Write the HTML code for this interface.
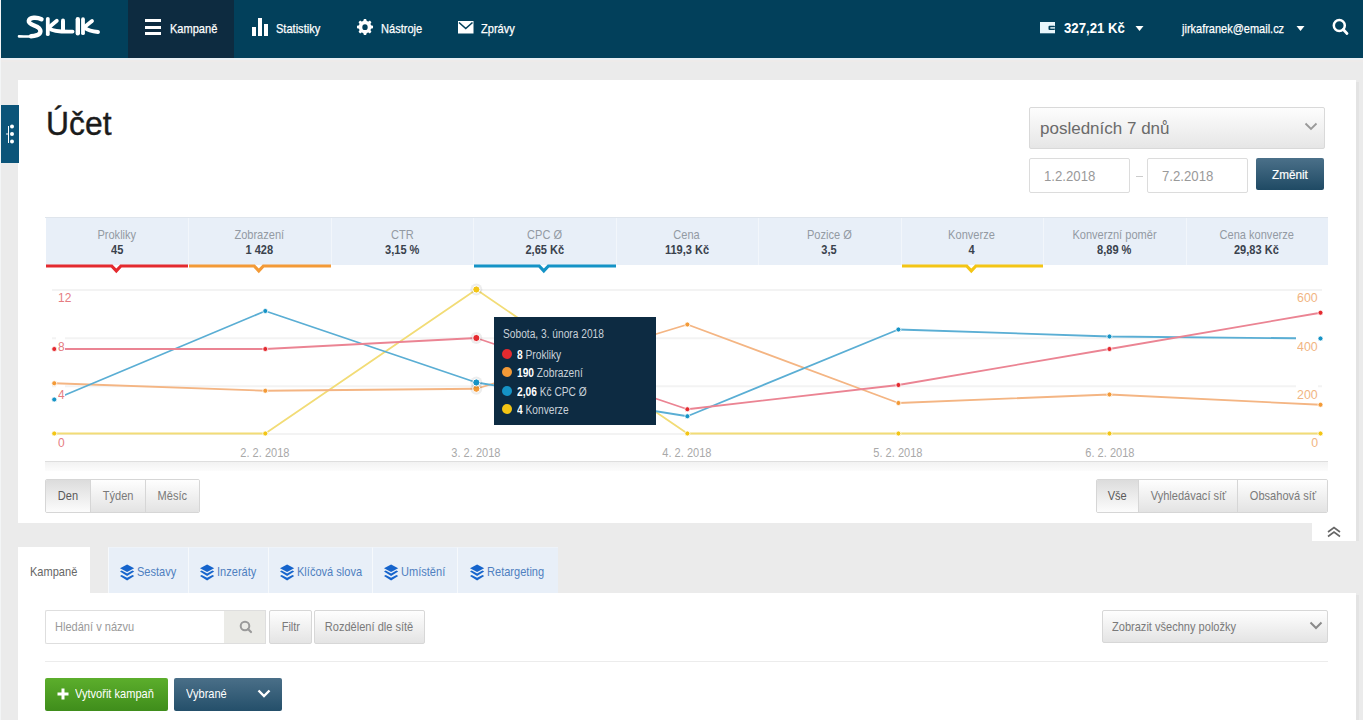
<!DOCTYPE html>
<html><head><meta charset="utf-8">
<style>
*{margin:0;padding:0;box-sizing:border-box}
html,body{width:1363px;height:720px;overflow:hidden;background:#ebebeb;font-family:"Liberation Sans",sans-serif}
.a{position:absolute}
.t{position:absolute;white-space:nowrap;line-height:1}
.n{display:inline-block;transform:scaleX(.85);transform-origin:0 50%}
.c{text-align:center}
.c .n{transform-origin:50% 50%}
.r{text-align:right}
.r .n{transform-origin:100% 50%}
#hdr{left:0;top:0;width:1363px;height:58px;background:#02405b}
.nav{color:#fff;font-size:13px;-webkit-text-stroke:0.25px #fff}

.met{font-size:13px;color:#939aa3}
.metv{font-size:13px;color:#3a424d;font-weight:bold}
.yl{font-size:13px;color:#e57c81}
.yl .n{transform:scaleX(.92)}
.yr{font-size:13px;color:#f1b582}
.yr .n{transform:scaleX(.95)}
.xl{font-size:13px;color:#a9a9a9}
.tt{font-size:12px;color:#c9d1d9}
.tt b{color:#fff}
.dot{width:10px;height:10px;border-radius:50%}
.bt{font-size:13px;color:#7a7a7a}
.btn{border:1px solid #d7d7d7;border-radius:2px;background:linear-gradient(#fefefe,#e4e4e4)}
.btn.act{background:linear-gradient(#dddddd,#fdfdfd)}
.tab{font-size:13px}
.grp{border:1px solid #d6d6d6;border-radius:2px;overflow:hidden;display:flex}
.seg{height:32px;background:linear-gradient(#fefefe,#e3e3e3);border-left:1px solid #d6d6d6}
.seg:first-child{border-left:0}
.seg.act{background:linear-gradient(#dcdcdc,#fcfcfc)}
.tb{background:#e8eff8;border-left:1px solid #f6f9fc;border-top:1px solid #eef3f9}
</style></head><body>
<!-- header -->
<div id="hdr" class="a"></div>
<div class="a" style="left:0;top:58px;width:1363px;height:2px;background:#e9f0f4"></div>
<div class="a" style="left:0;top:60px;width:1363px;height:2px;background:#eeebea"></div>
<div class="a" style="left:0;top:0;width:1px;height:720px;background:#f3f5f6"></div>
<svg class="a" style="left:0;top:0" width="110" height="58" viewBox="0 0 110 58">
 <g fill="none" stroke="#fff" stroke-linecap="round" stroke-linejoin="round">
  <path d="M41.5,19.2 C37,17 29.5,17 28.8,20.8 C28.3,24 34,25 37.5,27 C41.5,29.5 41.5,33.5 37,35.2 C35,35.9 33,36.2 31,36.3" stroke-width="4.4"/>
  <path d="M33,36 C28,36.6 23,36.6 19,36.4" stroke-width="2.6"/>
  <path d="M47.8,18.8 L47.8,34.2" stroke-width="3.8"/>
  <path d="M56.8,20.8 L49,27.2" stroke-width="3.8"/>
  <path d="M49.5,28.5 C53,31.8 63,31.8 72.5,31.6" stroke-width="3.9"/>
  <path d="M63,20.5 L63,31" stroke-width="4"/>
  <path d="M77.8,19.2 L77.8,33.2" stroke-width="4.4"/>
  <path d="M83,19.2 L83,33.2" stroke-width="3.8"/>
  <path d="M92,21 L84.5,27" stroke-width="3.8"/>
  <path d="M85,28 C88.5,30.8 93,31.4 98,32" stroke-width="3.9"/>
 </g>
</svg>
<div class="a" style="left:128px;top:0;width:106px;height:58px;background:#0d2b40"></div>
<!-- hamburger -->
<div class="a" style="left:145px;top:19px;width:16px;height:3px;background:#fff"></div>
<div class="a" style="left:145px;top:25.5px;width:16px;height:3px;background:#fff"></div>
<div class="a" style="left:145px;top:32px;width:16px;height:3px;background:#fff"></div>
<div class="t nav" style="left:170px;top:21.5px"><span class="n">Kampaně</span></div>
<!-- stats icon -->
<div class="a" style="left:252px;top:27px;width:4px;height:9px;background:#fff"></div>
<div class="a" style="left:258px;top:18px;width:4px;height:18px;background:#fff"></div>
<div class="a" style="left:264px;top:24px;width:4px;height:12px;background:#fff"></div>
<div class="t nav" style="left:276px;top:21.5px"><span class="n">Statistiky</span></div>
<!-- gear -->
<svg class="a" style="left:356.2px;top:18.2px" width="18" height="18" viewBox="0 0 18 18"><path fill="#fff" fill-rule="evenodd" d="M6.63,3.27 L7.52,2.57 L7.87,0.98 L10.13,0.98 L10.48,2.57 L11.37,3.27 L12.50,3.40 L13.87,2.53 L15.47,4.13 L14.60,5.50 L14.73,6.63 L15.43,7.52 L17.02,7.87 L17.02,10.13 L15.43,10.48 L14.73,11.37 L14.60,12.50 L15.47,13.87 L13.87,15.47 L12.50,14.60 L11.37,14.73 L10.48,15.43 L10.13,17.02 L7.87,17.02 L7.52,15.43 L6.63,14.73 L5.50,14.60 L4.13,15.47 L2.53,13.87 L3.40,12.50 L3.27,11.37 L2.57,10.48 L0.98,10.13 L0.98,7.87 L2.57,7.52 L3.27,6.63 L3.40,5.50 L2.53,4.13 L4.13,2.53 L5.50,3.40z M9,6.3 A2.7,2.9 0 1 0 9,12.1 A2.7,2.9 0 1 0 9,6.3z"/></svg>
<div class="t nav" style="left:381px;top:21.5px"><span class="n">Nástroje</span></div>
<!-- envelope -->
<svg class="a" style="left:458px;top:21px" width="16" height="13" viewBox="0 0 16 13">
 <rect x="0" y="0" width="15.5" height="12.5" fill="#fff"/>
 <path d="M1,1.5 L7.75,7.5 L14.5,1.5" fill="none" stroke="#02405b" stroke-width="1.6"/>
</svg>
<div class="t nav" style="left:481px;top:21.5px"><span class="n">Zprávy</span></div>
<!-- wallet -->
<svg class="a" style="left:1040px;top:22px" width="16" height="13" viewBox="0 0 16 13">
 <rect x="0" y="0" width="15" height="11.3" fill="#e8f6fb"/>
 <rect x="8.5" y="3.8" width="6.5" height="4.2" rx="1" fill="#02405b"/>
 <rect x="10.3" y="5.2" width="4.7" height="1.4" fill="#e8f6fb"/>
</svg>
<div class="t" style="left:1064px;top:20px;color:#fff;font-size:15px;font-weight:bold"><span class="n" style="transform:scaleX(.88)">327,21 Kč</span></div>
<svg class="a" style="left:1135px;top:24.5px" width="10" height="7"><path d="M0.5,1 L8.5,1 L4.5,6z" fill="#fff"/></svg>
<div class="t nav" style="left:1182px;top:21.5px"><span class="n" style="transform:scaleX(.845)">jirkafranek@email.cz</span></div>
<svg class="a" style="left:1295.5px;top:25px" width="10" height="7"><path d="M0.5,1 L8.5,1 L4.5,6z" fill="#fff"/></svg>
<!-- search -->
<svg class="a" style="left:1330px;top:16px" width="22" height="22" viewBox="0 0 22 22">
 <circle cx="9.3" cy="9.6" r="5.5" fill="none" stroke="#fff" stroke-width="2.5"/>
 <path d="M13.3,13.6 L17,17.4" stroke="#fff" stroke-width="2.8" stroke-linecap="round"/>
</svg>

<!-- card 1 -->
<div class="a" style="left:1356px;top:82px;width:3px;height:459px;background:#e3e3e3"></div>
<div class="a" style="left:1356px;top:595px;width:3px;height:125px;background:#e3e3e3"></div>
<div class="a" style="left:18px;top:80px;width:1338px;height:443px;background:#fff"></div>
<div class="a" style="left:1px;top:105px;width:18px;height:58px;background:#0b5479"></div>
<svg class="a" style="left:1px;top:105px" width="18" height="58">
 <path d="M7.5,21 L7.5,38 M5,29 L8,29" stroke="#fff" stroke-width="1" fill="none"/>
 <circle cx="11" cy="21.5" r="2" fill="#fff"/>
 <circle cx="11" cy="29" r="2" fill="#fff"/>
 <circle cx="11" cy="36.5" r="2" fill="#fff"/>
</svg>
<div class="t" style="left:45.5px;top:107px;font-size:33px;color:#1b1b1b;-webkit-text-stroke:0.4px #1b1b1b"><span class="n" style="transform:scaleX(.965)">Účet</span></div>

<!-- date select -->
<div class="a" style="left:1029px;top:107px;width:296px;height:42px;border:1px solid #d9d9d9;border-radius:2px;background:linear-gradient(#fdfdfd,#e6e6e6)"></div>
<div class="t" style="left:1040px;top:119.5px;font-size:17px;color:#6a6a6a">posledních 7 dnů</div>
<svg class="a" style="left:1304px;top:122px" width="14" height="10"><path d="M1.5,1.5 L7,7 L12.5,1.5" fill="none" stroke="#999" stroke-width="1.8"/></svg>
<div class="a" style="left:1029px;top:158px;width:101px;height:35px;border:1px solid #dcdcdc;border-radius:2px;background:#fff"></div>
<div class="t" style="left:1044px;top:168px;font-size:15px;color:#9a9a9a"><span class="n" style="transform:scaleX(.88)">1.2.2018</span></div>
<div class="a" style="left:1136px;top:176px;width:7px;height:1px;background:#ccc"></div>
<div class="a" style="left:1147px;top:158px;width:101px;height:35px;border:1px solid #dcdcdc;border-radius:2px;background:#fff"></div>
<div class="t" style="left:1162px;top:168px;font-size:15px;color:#9a9a9a"><span class="n" style="transform:scaleX(.88)">7.2.2018</span></div>
<div class="a" style="left:1256px;top:158px;width:68px;height:32px;border-radius:2px;background:linear-gradient(#4b7089,#1f4a64)"></div>
<div class="t" style="left:1272px;top:168px;font-size:13px;color:#fff;-webkit-text-stroke:0.2px #fff"><span class="n" style="transform:scaleX(.9)">Změnit</span></div>
<div class="a" style="left:45px;top:217px;width:1283px;height:1px;background:#dfe5ec"></div>
<div class="a" style="left:46px;top:218px;width:1282px;height:47px;background:#f2f6fb"></div>
<div class="a" style="left:46px;top:218px;width:142px;height:47px;background:#e8eff8"></div>
<div class="t c met" style="left:47.2px;top:227.5px;width:140px"><span class="n">Prokliky</span></div>
<div class="t c metv" style="left:47.2px;top:242.5px;width:140px"><span class="n">45</span></div>
<svg class="a" style="left:46px;top:262px" width="142" height="14"><path d="M0,4 L65.70,4 L70.30,8.9 L74.90,4 L142,4" fill="none" stroke="#e42a2f" stroke-width="3.2"/></svg>
<div class="a" style="left:189px;top:218px;width:142px;height:47px;background:#e8eff8"></div>
<div class="t c met" style="left:189.7px;top:227.5px;width:140px"><span class="n">Zobrazení</span></div>
<div class="t c metv" style="left:189.7px;top:242.5px;width:140px"><span class="n">1 428</span></div>
<svg class="a" style="left:189px;top:262px" width="142" height="14"><path d="M0,4 L65.20,4 L69.80,8.9 L74.40,4 L142,4" fill="none" stroke="#f39a37" stroke-width="3.2"/></svg>
<div class="a" style="left:332px;top:218px;width:141px;height:47px;background:#e8eff8"></div>
<div class="t c met" style="left:332.1px;top:227.5px;width:140px"><span class="n">CTR</span></div>
<div class="t c metv" style="left:332.1px;top:242.5px;width:140px"><span class="n">3,15 %</span></div>
<div class="a" style="left:474px;top:218px;width:142px;height:47px;background:#e8eff8"></div>
<div class="t c met" style="left:474.6px;top:227.5px;width:140px"><span class="n">CPC Ø</span></div>
<div class="t c metv" style="left:474.6px;top:242.5px;width:140px"><span class="n">2,65 Kč</span></div>
<svg class="a" style="left:474px;top:262px" width="142" height="14"><path d="M0,4 L65.20,4 L69.80,8.9 L74.40,4 L142,4" fill="none" stroke="#1593c6" stroke-width="3.2"/></svg>
<div class="a" style="left:617px;top:218px;width:141px;height:47px;background:#e8eff8"></div>
<div class="t c met" style="left:617.0px;top:227.5px;width:140px"><span class="n">Cena</span></div>
<div class="t c metv" style="left:617.0px;top:242.5px;width:140px"><span class="n">119,3 Kč</span></div>
<div class="a" style="left:759px;top:218px;width:142px;height:47px;background:#e8eff8"></div>
<div class="t c met" style="left:759.4px;top:227.5px;width:140px"><span class="n">Pozice Ø</span></div>
<div class="t c metv" style="left:759.4px;top:242.5px;width:140px"><span class="n">3,5</span></div>
<div class="a" style="left:902px;top:218px;width:141px;height:47px;background:#e8eff8"></div>
<div class="t c met" style="left:901.9px;top:227.5px;width:140px"><span class="n">Konverze</span></div>
<div class="t c metv" style="left:901.9px;top:242.5px;width:140px"><span class="n">4</span></div>
<svg class="a" style="left:902px;top:262px" width="141" height="14"><path d="M0,4 L64.70,4 L69.30,8.9 L73.90,4 L141,4" fill="none" stroke="#f3c515" stroke-width="3.2"/></svg>
<div class="a" style="left:1044px;top:218px;width:142px;height:47px;background:#e8eff8"></div>
<div class="t c met" style="left:1044.3px;top:227.5px;width:140px"><span class="n">Konverzní poměr</span></div>
<div class="t c metv" style="left:1044.3px;top:242.5px;width:140px"><span class="n">8,89 %</span></div>
<div class="a" style="left:1187px;top:218px;width:141px;height:47px;background:#e8eff8"></div>
<div class="t c met" style="left:1186.8px;top:227.5px;width:140px"><span class="n">Cena konverze</span></div>
<div class="t c metv" style="left:1186.8px;top:242.5px;width:140px"><span class="n">29,83 Kč</span></div>
<svg class="a" style="left:0;top:0" width="1363" height="720">
<defs><linearGradient id="band" x1="0" y1="0" x2="0" y2="1"><stop offset="0" stop-color="#f2f2f2"/><stop offset="1" stop-color="#fcfcfc"/></linearGradient></defs>
<path d="M52,290 L1322,290" stroke="#f3f3f3" stroke-width="2"/>
<path d="M52,338.3 L1322,338.3" stroke="#f3f3f3" stroke-width="2"/>
<path d="M52,386.2 L1322,386.2" stroke="#f3f3f3" stroke-width="2"/>
<path d="M52,434 L1322,434" stroke="#f3f3f3" stroke-width="2"/>
<path d="M45,461.5 L1328,461.5" stroke="#dedede" stroke-width="1"/>
<rect x="45" y="462" width="1283" height="9" fill="url(#band)"/>
<path d="M54.25,433.5 L265.29,433.5 L476.33,289.5 L687.37,433.5 L898.41,433.5 L1109.45,433.5 L1320.49,433.5" fill="none" stroke="#f2dc76" stroke-width="1.8" stroke-linejoin="round"/>
<path d="M54.25,383.25 L265.29,390.75 L476.33,388.75 L687.37,324.5 L898.41,403 L1109.45,394.5 L1320.49,404.75" fill="none" stroke="#f4b583" stroke-width="1.8" stroke-linejoin="round"/>
<path d="M54.25,399.5 L265.29,311 L476.33,382.5 L687.37,416.25 L898.41,329.5 L1109.45,336.5 L1320.49,338.5" fill="none" stroke="#5aaed4" stroke-width="1.8" stroke-linejoin="round"/>
<path d="M54.25,349 L265.29,349 L476.33,338 L687.37,409.25 L898.41,385 L1109.45,349 L1320.49,312.75" fill="none" stroke="#eb8493" stroke-width="1.8" stroke-linejoin="round"/>
<rect x="56" y="291" width="16" height="12" fill="#fff"/>
<rect x="56" y="337" width="9" height="15" fill="#fff"/>
<rect x="56" y="385" width="9" height="15" fill="#fff"/>
<rect x="56" y="437" width="9" height="11" fill="#fff"/>
<rect x="1296" y="291" width="22" height="12" fill="#fff"/>
<rect x="1296" y="337" width="22" height="15" fill="#fff"/>
<rect x="1296" y="385" width="22" height="15" fill="#fff"/>
<rect x="1309" y="437" width="9" height="11" fill="#fff"/>
<circle cx="54.25" cy="433.5" r="2.5" fill="#f3c515" stroke="#fff" stroke-width="0.8"/>
<circle cx="265.29" cy="433.5" r="2.5" fill="#f3c515" stroke="#fff" stroke-width="0.8"/>
<circle cx="476.33" cy="289.5" r="6" fill="#000" fill-opacity="0.07"/>
<circle cx="476.33" cy="289.5" r="3.6" fill="#f3c515" stroke="#fff" stroke-width="1"/>
<circle cx="687.37" cy="433.5" r="2.5" fill="#f3c515" stroke="#fff" stroke-width="0.8"/>
<circle cx="898.41" cy="433.5" r="2.5" fill="#f3c515" stroke="#fff" stroke-width="0.8"/>
<circle cx="1109.45" cy="433.5" r="2.5" fill="#f3c515" stroke="#fff" stroke-width="0.8"/>
<circle cx="1320.49" cy="433.5" r="2.5" fill="#f3c515" stroke="#fff" stroke-width="0.8"/>
<circle cx="54.25" cy="383.25" r="2.5" fill="#f39a37" stroke="#fff" stroke-width="0.8"/>
<circle cx="265.29" cy="390.75" r="2.5" fill="#f39a37" stroke="#fff" stroke-width="0.8"/>
<circle cx="476.33" cy="388.75" r="6" fill="#000" fill-opacity="0.07"/>
<circle cx="476.33" cy="388.75" r="3.6" fill="#f39a37" stroke="#fff" stroke-width="1"/>
<circle cx="687.37" cy="324.5" r="2.5" fill="#f39a37" stroke="#fff" stroke-width="0.8"/>
<circle cx="898.41" cy="403" r="2.5" fill="#f39a37" stroke="#fff" stroke-width="0.8"/>
<circle cx="1109.45" cy="394.5" r="2.5" fill="#f39a37" stroke="#fff" stroke-width="0.8"/>
<circle cx="1320.49" cy="404.75" r="2.5" fill="#f39a37" stroke="#fff" stroke-width="0.8"/>
<circle cx="54.25" cy="399.5" r="2.5" fill="#1593c6" stroke="#fff" stroke-width="0.8"/>
<circle cx="265.29" cy="311" r="2.5" fill="#1593c6" stroke="#fff" stroke-width="0.8"/>
<circle cx="476.33" cy="382.5" r="6" fill="#000" fill-opacity="0.07"/>
<circle cx="476.33" cy="382.5" r="3.6" fill="#1593c6" stroke="#fff" stroke-width="1"/>
<circle cx="687.37" cy="416.25" r="2.5" fill="#1593c6" stroke="#fff" stroke-width="0.8"/>
<circle cx="898.41" cy="329.5" r="2.5" fill="#1593c6" stroke="#fff" stroke-width="0.8"/>
<circle cx="1109.45" cy="336.5" r="2.5" fill="#1593c6" stroke="#fff" stroke-width="0.8"/>
<circle cx="1320.49" cy="338.5" r="2.5" fill="#1593c6" stroke="#fff" stroke-width="0.8"/>
<circle cx="54.25" cy="349" r="2.5" fill="#e42a2f" stroke="#fff" stroke-width="0.8"/>
<circle cx="265.29" cy="349" r="2.5" fill="#e42a2f" stroke="#fff" stroke-width="0.8"/>
<circle cx="476.33" cy="338" r="6" fill="#000" fill-opacity="0.07"/>
<circle cx="476.33" cy="338" r="3.6" fill="#e42a2f" stroke="#fff" stroke-width="1"/>
<circle cx="687.37" cy="409.25" r="2.5" fill="#e42a2f" stroke="#fff" stroke-width="0.8"/>
<circle cx="898.41" cy="385" r="2.5" fill="#e42a2f" stroke="#fff" stroke-width="0.8"/>
<circle cx="1109.45" cy="349" r="2.5" fill="#e42a2f" stroke="#fff" stroke-width="0.8"/>
<circle cx="1320.49" cy="312.75" r="2.5" fill="#e42a2f" stroke="#fff" stroke-width="0.8"/>
</svg>
<div class="t yl" style="left:58px;top:291px"><span class="n">12</span></div>
<div class="t yl" style="left:58px;top:340px"><span class="n">8</span></div>
<div class="t yl" style="left:58px;top:388px"><span class="n">4</span></div>
<div class="t yl" style="left:58px;top:436px"><span class="n">0</span></div>
<div class="t r yr" style="left:1218px;top:291px;width:100px"><span class="n">600</span></div>
<div class="t r yr" style="left:1218px;top:340px;width:100px"><span class="n">400</span></div>
<div class="t r yr" style="left:1218px;top:388px;width:100px"><span class="n">200</span></div>
<div class="t r yr" style="left:1218px;top:436px;width:100px"><span class="n">0</span></div>
<div class="t c xl" style="left:215.29px;top:445.7px;width:100px"><span class="n">2. 2. 2018</span></div>
<div class="t c xl" style="left:426.33px;top:445.7px;width:100px"><span class="n">3. 2. 2018</span></div>
<div class="t c xl" style="left:637.37px;top:445.7px;width:100px"><span class="n">4. 2. 2018</span></div>
<div class="t c xl" style="left:848.41px;top:445.7px;width:100px"><span class="n">5. 2. 2018</span></div>
<div class="t c xl" style="left:1059.45px;top:445.7px;width:100px"><span class="n">6. 2. 2018</span></div>
<div class="a" style="left:494px;top:317px;width:162px;height:108px;background:#0d2b42"></div>
<div class="t tt" style="left:503px;top:327.5px;color:#c9d1d9"><span class="n">Sobota, 3. února 2018</span></div>
<div class="a dot" style="left:502px;top:349px;background:#e42a2f"></div>
<div class="a dot" style="left:502px;top:367px;background:#f39a37"></div>
<div class="a dot" style="left:502px;top:385.5px;background:#1593c6"></div>
<div class="a dot" style="left:502px;top:404px;background:#f3c515"></div>
<div class="t tt" style="left:517px;top:348.5px"><span class="n"><b>8</b> Prokliky</span></div>
<div class="t tt" style="left:517px;top:367px"><span class="n"><b>190</b> Zobrazení</span></div>
<div class="t tt" style="left:517px;top:385.5px"><span class="n"><b>2,06</b> Kč CPC Ø</span></div>
<div class="t tt" style="left:517px;top:403.5px"><span class="n"><b>4</b> Konverze</span></div>

<div class="a grp" style="left:45px;top:479px;width:155px;height:34px"><div class="seg act" style="width:44px"></div><div class="seg" style="width:55px"></div><div class="seg" style="width:54px"></div></div>
<div class="t c bt" style="left:45px;top:489px;width:46px;color:#5a5a5a"><span class="n">Den</span></div>
<div class="t c bt" style="left:90px;top:489px;width:56px"><span class="n">Týden</span></div>
<div class="t c bt" style="left:145px;top:489px;width:55px"><span class="n">Měsíc</span></div>
<div class="a grp" style="left:1096px;top:479px;width:232px;height:34px"><div class="seg act" style="width:41px"></div><div class="seg" style="width:99px"></div><div class="seg" style="width:90px"></div></div>
<div class="t c bt" style="left:1096px;top:489px;width:43px;color:#5a5a5a"><span class="n">Vše</span></div>
<div class="t c bt" style="left:1138px;top:489px;width:100px"><span class="n">Vyhledávací síť</span></div>
<div class="t c bt" style="left:1237px;top:489px;width:91px"><span class="n">Obsahová síť</span></div>
<div class="a" style="left:1312px;top:523px;width:44px;height:18px;background:#fff"></div>
<svg class="a" style="left:1326px;top:526px" width="16" height="12"><path d="M2,6 L8,1.5 L14,6 M2,10.5 L8,6 L14,10.5" fill="none" stroke="#666" stroke-width="1.6"/></svg>

<div class="a" style="left:18px;top:547px;width:72px;height:47px;background:#fff"></div>
<div class="t tab" style="left:30px;top:565px;color:#666"><span class="n">Kampaně</span></div>
<div class="a tb" style="left:108px;top:547px;width:80px;height:46px"></div>
<svg class="a" style="left:120px;top:564px" width="15" height="18" viewBox="0 0 15 18"><path d="M7.1,0.4 L14.2,4.3 L7.1,7.9 L0,4.3z" fill="#1664cc"/><path d="M0,7.5 L1.7,6.5 L7.1,9.4 L12.5,6.5 L14.2,7.5 L7.1,11.9z" fill="#1664cc"/><path d="M0,11.9 L1.7,10.9 L7.1,13.8 L12.5,10.9 L14.2,11.9 L7.1,16.6z" fill="#1664cc"/></svg>
<div class="t tab" style="left:137px;top:565px;color:#4f7fc0"><span class="n">Sestavy</span></div>
<div class="a tb" style="left:188px;top:547px;width:80px;height:46px"></div>
<svg class="a" style="left:200px;top:564px" width="15" height="18" viewBox="0 0 15 18"><path d="M7.1,0.4 L14.2,4.3 L7.1,7.9 L0,4.3z" fill="#1664cc"/><path d="M0,7.5 L1.7,6.5 L7.1,9.4 L12.5,6.5 L14.2,7.5 L7.1,11.9z" fill="#1664cc"/><path d="M0,11.9 L1.7,10.9 L7.1,13.8 L12.5,10.9 L14.2,11.9 L7.1,16.6z" fill="#1664cc"/></svg>
<div class="t tab" style="left:217px;top:565px;color:#4f7fc0"><span class="n">Inzeráty</span></div>
<div class="a tb" style="left:268px;top:547px;width:104px;height:46px"></div>
<svg class="a" style="left:280px;top:564px" width="15" height="18" viewBox="0 0 15 18"><path d="M7.1,0.4 L14.2,4.3 L7.1,7.9 L0,4.3z" fill="#1664cc"/><path d="M0,7.5 L1.7,6.5 L7.1,9.4 L12.5,6.5 L14.2,7.5 L7.1,11.9z" fill="#1664cc"/><path d="M0,11.9 L1.7,10.9 L7.1,13.8 L12.5,10.9 L14.2,11.9 L7.1,16.6z" fill="#1664cc"/></svg>
<div class="t tab" style="left:297px;top:565px;color:#4f7fc0"><span class="n">Klíčová slova</span></div>
<div class="a tb" style="left:372px;top:547px;width:85px;height:46px"></div>
<svg class="a" style="left:384px;top:564px" width="15" height="18" viewBox="0 0 15 18"><path d="M7.1,0.4 L14.2,4.3 L7.1,7.9 L0,4.3z" fill="#1664cc"/><path d="M0,7.5 L1.7,6.5 L7.1,9.4 L12.5,6.5 L14.2,7.5 L7.1,11.9z" fill="#1664cc"/><path d="M0,11.9 L1.7,10.9 L7.1,13.8 L12.5,10.9 L14.2,11.9 L7.1,16.6z" fill="#1664cc"/></svg>
<div class="t tab" style="left:401px;top:565px;color:#4f7fc0"><span class="n">Umístění</span></div>
<div class="a tb" style="left:457px;top:547px;width:101px;height:46px"></div>
<svg class="a" style="left:470px;top:564px" width="15" height="18" viewBox="0 0 15 18"><path d="M7.1,0.4 L14.2,4.3 L7.1,7.9 L0,4.3z" fill="#1664cc"/><path d="M0,7.5 L1.7,6.5 L7.1,9.4 L12.5,6.5 L14.2,7.5 L7.1,11.9z" fill="#1664cc"/><path d="M0,11.9 L1.7,10.9 L7.1,13.8 L12.5,10.9 L14.2,11.9 L7.1,16.6z" fill="#1664cc"/></svg>
<div class="t tab" style="left:487px;top:565px;color:#4f7fc0"><span class="n">Retargeting</span></div>

<div class="a" style="left:18px;top:593px;width:1338px;height:127px;background:#fff"></div>
<div class="a" style="left:45px;top:610px;width:180px;height:34px;border:1px solid #dedede;border-right:0;border-radius:2px 0 0 2px;background:#fff"></div>
<div class="t bt" style="left:55px;top:620px;color:#9a9a9a"><span class="n">Hledání v názvu</span></div>
<div class="a" style="left:224px;top:610px;width:42px;height:34px;background:#ebebe7;border:1px solid #dedede;border-left:0"></div>
<svg class="a" style="left:238px;top:619px" width="16" height="16"><circle cx="7" cy="7" r="4.3" fill="none" stroke="#9a9a9a" stroke-width="2"/><path d="M10,10 L13,13" stroke="#9a9a9a" stroke-width="2.2" stroke-linecap="round"/></svg>
<div class="a btn" style="left:269px;top:610px;width:43px;height:34px"></div>
<div class="t c bt" style="left:269px;top:620px;width:43px"><span class="n">Filtr</span></div>
<div class="a btn" style="left:314px;top:610px;width:111px;height:34px"></div>
<div class="t c bt" style="left:314px;top:620px;width:111px"><span class="n">Rozdělení dle sítě</span></div>
<div class="a btn" style="left:1102px;top:610px;width:226px;height:33px"></div>
<div class="t bt" style="left:1112px;top:620px"><span class="n">Zobrazit všechny položky</span></div>
<svg class="a" style="left:1309px;top:621px" width="14" height="10"><path d="M1.5,1.5 L7,7 L12.5,1.5" fill="none" stroke="#8a8a8a" stroke-width="2"/></svg>
<div class="a" style="left:45px;top:661px;width:1283px;height:1px;background:#ececec"></div>
<div class="a" style="left:45px;top:678px;width:123px;height:33px;border-radius:2px;background:linear-gradient(#5cae2c,#3f8d1b)"></div>
<svg class="a" style="left:57px;top:688px" width="12" height="12"><path d="M6,0.5 L6,11.5 M0.5,6 L11.5,6" stroke="#fff" stroke-width="3"/></svg>
<div class="t" style="left:75px;top:687px;font-size:13px;color:#fff"><span class="n">Vytvořit kampaň</span></div>
<div class="a" style="left:174px;top:678px;width:108px;height:33px;border-radius:2px;background:linear-gradient(#4a6f88,#244f6a)"></div>
<div class="t" style="left:186px;top:687px;font-size:13px;color:#fff"><span class="n">Vybrané</span></div>
<svg class="a" style="left:257px;top:689px" width="14" height="10"><path d="M1.5,1.5 L7,7 L12.5,1.5" fill="none" stroke="#fff" stroke-width="2.4"/></svg>
</body></html>
